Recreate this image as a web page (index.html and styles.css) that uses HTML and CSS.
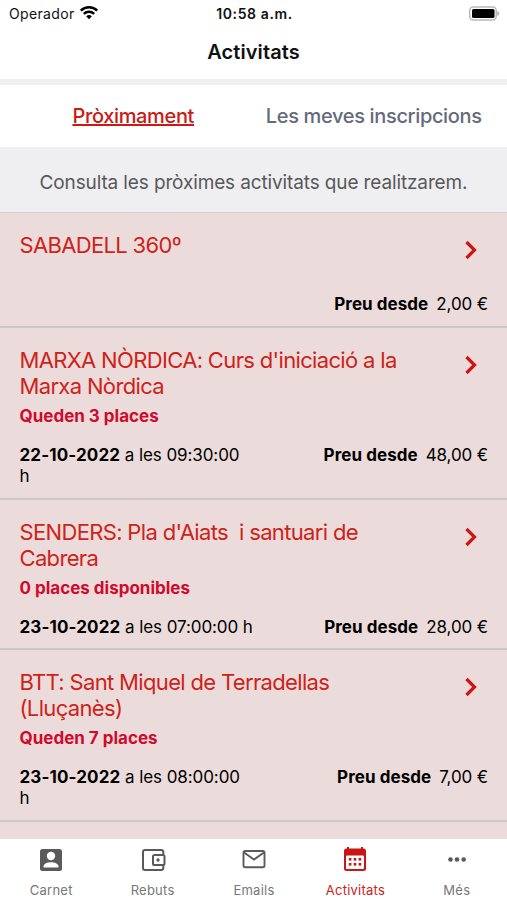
FILE: index.html
```html
<!DOCTYPE html>
<html lang="ca">
<head>
    <meta charset="UTF-8">
    <meta name="viewport" content="width=device-width, initial-scale=1.0">
    <title>Activitats</title>
    <link rel="stylesheet" href="styles.css">
</head>
<body>
    <div class="status-bar">
        <div class="operator">
            <span>Operador</span>
            <svg class="wifi" viewBox="0 0 20 15" width="20" height="15">
                <path d="M1.8 5.6a11.8 11.8 0 0 1 16.4 0" fill="none" stroke="#000" stroke-width="2.5"/>
                <path d="M4.8 8.9a7.5 7.5 0 0 1 10.4 0" fill="none" stroke="#000" stroke-width="2.4"/>
                <path d="M10 14.2 7.2 11.3a4 4 0 0 1 5.6 0z" fill="#000"/>
            </svg>
        </div>
        <span class="clock">10:58 a.m.</span>
        <svg class="battery" viewBox="0 0 32 16" width="32" height="16">
            <rect x="1.700" y="1" width="26.500" height="13" rx="3.500" fill="#fff" stroke="#b9b9b9" stroke-width="1.500"/>
            <rect x="4" y="3" width="22.500" height="9" rx="1.500" fill="#000"/>
            <path d="M29.300 5c2.600 1 2.600 4 0 5z" fill="#b0b0b0"/>
        </svg>
    </div>

    <header>
        <h1>Activitats</h1>
    </header>

    <div class="tabs">
        <a class="tab active"><span>Pròximament</span></a>
        <a class="tab"><span>Les meves inscripcions</span></a>
    </div>

    <p class="intro">Consulta les pròximes activitats que realitzarem.</p>

    <main class="list">
        <div class="item">
            <div class="item-top">
                <h2>SABADELL 360º</h2>
                <svg class="arrow" viewBox="0 0 14 20" width="14" height="20"><path d="M2.500 2 10.500 10 2.500 18"/></svg>
            </div>
            <div class="item-bottom">
                <p class="date"></p>
                <p class="price"><b>Preu desde</b><span>2,00 €</span></p>
            </div>
        </div>
        <div class="item">
            <div class="item-top">
                <h2>MARXA NÒRDICA: Curs d'iniciació a la Marxa Nòrdica</h2>
                <svg class="arrow" viewBox="0 0 14 20" width="14" height="20"><path d="M2.500 2 10.500 10 2.500 18"/></svg>
            </div>
            <p class="places">Queden 3 places</p>
            <div class="item-bottom">
                <p class="date"><b>22-10-2022</b> a les 09:30:00<br>h</p>
                <p class="price"><b>Preu desde</b><span>48,00 €</span></p>
            </div>
        </div>
        <div class="item">
            <div class="item-top">
                <h2>SENDERS: Pla d'Aiats&nbsp; i santuari de Cabrera</h2>
                <svg class="arrow" viewBox="0 0 14 20" width="14" height="20"><path d="M2.500 2 10.500 10 2.500 18"/></svg>
            </div>
            <p class="places">0 places disponibles</p>
            <div class="item-bottom">
                <p class="date"><b>23-10-2022</b> a les 07:00:00 h</p>
                <p class="price"><b>Preu desde</b><span>28,00 €</span></p>
            </div>
        </div>
        <div class="item">
            <div class="item-top">
                <h2>BTT: Sant Miquel de Terradellas (Lluçanès)</h2>
                <svg class="arrow" viewBox="0 0 14 20" width="14" height="20"><path d="M2.500 2 10.500 10 2.500 18"/></svg>
            </div>
            <p class="places">Queden 7 places</p>
            <div class="item-bottom">
                <p class="date"><b>23-10-2022</b> a les 08:00:00<br>h</p>
                <p class="price"><b>Preu desde</b><span>7,00 €</span></p>
            </div>
        </div>
    </main>

    <nav class="bottom-nav">
        <a class="nav-item">
            <svg viewBox="0 0 30 30" width="30" height="30">
                <rect x="4" y="4" width="22" height="22" rx="2.500" fill="#5a5a5a"/>
                <circle cx="15" cy="11" r="4.200" fill="#fff"/>
                <path d="M7.500 22.500v-1c0-2.800 4-4.300 7.500-4.300s7.500 1.500 7.500 4.300v1z" fill="#fff"/>
            </svg>
            <span>Carnet</span>
        </a>
        <a class="nav-item">
            <svg viewBox="0 0 30 30" width="30" height="30" fill="none" stroke="#5a5a5a" stroke-width="2">
                <path d="M25.300 9.500V7a2 2 0 0 0-2-2H7a2 2 0 0 0-2 2v16a2 2 0 0 0 2 2h16.300a2 2 0 0 0 2-2v-2.500"/>
                <rect x="15" y="10" width="11.500" height="10" rx="1.600" fill="#fff"/>
                <circle cx="20" cy="15" r="1.700" fill="#5a5a5a" stroke="none"/>
            </svg>
            <span>Rebuts</span>
        </a>
        <a class="nav-item">
            <svg viewBox="0 0 30 30" width="30" height="30" fill="none" stroke="#5a5a5a" stroke-width="1.900">
                <rect x="4.500" y="6" width="21" height="16.300" rx="1.800"/>
                <path d="M5 7.500 15 14.500 25 7.500"/>
            </svg>
            <span>Emails</span>
        </a>
        <a class="nav-item active">
            <svg viewBox="0 0 30 30" width="30" height="30">
                <path d="M8 2v4M22 2v4" stroke="#c91515" stroke-width="2" fill="none"/>
                <path d="M6.500 3.500h17A2.500 2.500 0 0 1 26 6v17.500a2.500 2.500 0 0 1-2.500 2.500h-17A2.500 2.500 0 0 1 4 23.500V6a2.500 2.500 0 0 1 2.500-2.500z" fill="#c91515"/>
                <rect x="6" y="10.500" width="18" height="13.500" rx="1" fill="#fff"/>
                <g fill="#c91515">
                    <rect x="8.800" y="13" width="2.600" height="2.600"/>
                    <rect x="13.700" y="13" width="2.600" height="2.600"/>
                    <rect x="18.600" y="13" width="2.600" height="2.600"/>
                    <rect x="8.800" y="18" width="2.600" height="2.600"/>
                    <rect x="13.700" y="18" width="2.600" height="2.600"/>
                    <rect x="18.600" y="18" width="2.600" height="2.600"/>
                </g>
            </svg>
            <span>Activitats</span>
        </a>
        <a class="nav-item">
            <svg viewBox="0 0 30 30" width="30" height="30" fill="#5a5a5a">
                <circle cx="8.500" cy="14.500" r="2.300"/>
                <circle cx="15" cy="14.500" r="2.300"/>
                <circle cx="21.700" cy="14.500" r="2.300"/>
            </svg>
            <span>Més</span>
        </a>
    </nav>
</body>
</html>
```
FILE: styles.css
```css
* {
    box-sizing: border-box;
}
body {
    font-family: Inter, Roboto, sans-serif;
    margin: 0;
    height: 900px;
    display: flex;
    flex-direction: column;
    overflow: hidden;
    background-color: #fff;
    color: #111;
}
h1, h2, p {
    margin: 0;
}
.status-bar {
    height: 28px;
    display: grid;
    grid-template-columns: 1fr auto 1fr;
    align-items: center;
    padding: 0 7px 1px 9px;
    font-size: 14px;
}
.operator {
    display: flex;
    align-items: center;
    gap: 4px;
    letter-spacing: 0.35px;
}
.wifi {
    margin-bottom: 2px;
}
.clock {
    font-weight: 600;
    letter-spacing: 0.6px;
}
.battery {
    justify-self: end;
}
header {
    height: 57px;
    padding-top: 10px;
    border-bottom: 6px solid #efeff0;
    text-align: center;
}
h1 {
    font-size: 20px;
    font-weight: 600;
    line-height: 28px;
    letter-spacing: 0.1px;
}
.tabs {
    height: 62px;
    display: flex;
    align-items: center;
    padding: 0 13px;
    font-size: 20px;
    font-weight: 500;
    letter-spacing: -0.35px;
}
.tab {
    width: 50%;
    text-align: center;
    white-space: nowrap;
    color: #656a7b;
}
.tab.active {
    color: #cb1a14;
    text-decoration: underline;
}
.intro {
    height: 66px;
    padding-top: 22px;
    background-color: #efeff1;
    border-bottom: 1px solid #d2cfd0;
    color: #58585a;
    font-size: 19px;
    line-height: 28px;
    letter-spacing: -0.13px;
    text-align: center;
}
.list {
    flex: 1;
    overflow: hidden;
    background-color: #ecdbdb;
}
.item {
    min-height: 115px;
    display: flex;
    flex-direction: column;
    padding: 19px 19px 10.6px 19.5px;
    border-bottom: 2px solid #cdc5c6;
    color: #000;
    font-size: 17px;
    line-height: 21px;
}
.item-top {
    display: flex;
    justify-content: space-between;
    align-items: flex-start;
}
h2 {
    width: 390px;
    font-size: 22px;
    font-weight: 400;
    line-height: 26px;
    letter-spacing: -0.66px;
    color: #cd2319;
}
.arrow {
    margin: 8px 10px 0 0;
    fill: none;
    stroke: #cc1515;
    stroke-width: 3.2;
}
.places {
    margin-top: 7px;
    font-weight: 700;
    color: #cf0a2c;
}
.item-bottom {
    display: flex;
    justify-content: space-between;
    margin-top: auto;
    padding-top: 18px;
}
.date {
    width: 235px;
    letter-spacing: -0.08px;
}
.price {
    display: flex;
    gap: 8px;
    letter-spacing: -0.12px;
    white-space: nowrap;
}
b {
    font-weight: 700;
    letter-spacing: 0.12px;
}
.price b {
    letter-spacing: 0.06px;
}
.bottom-nav {
    height: 61px;
    display: flex;
    background-color: #fff;
}
.nav-item {
    flex: 1;
    display: flex;
    flex-direction: column;
    align-items: center;
    padding: 6px 0 0 1px;
    font-size: 13px;
    line-height: 18px;
    letter-spacing: 0.25px;
    color: #777;
}
.nav-item span {
    margin-top: 6px;
}
.nav-item.active {
    color: #cb2320;
}
```
